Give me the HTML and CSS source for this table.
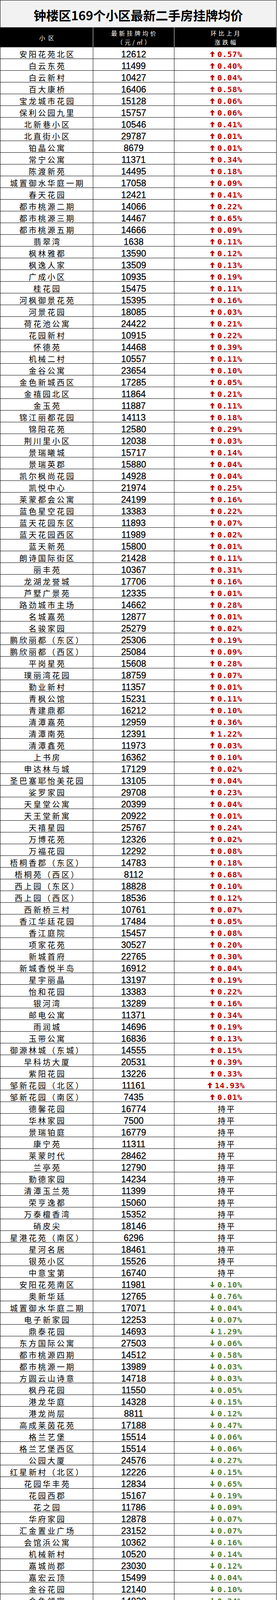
FILE: index.html
```
<!DOCTYPE html>
<html lang="zh-CN">
<head>
<meta charset="utf-8">
<title>钟楼区169个小区最新二手房挂牌均价</title>
<link rel="stylesheet" href="styles.css">
</head>
<body>
<div class="sheet">
  <div class="title">钟楼区169个小区最新二手房挂牌均价</div>
  <div class="head">
    <div class="wide">小区</div>
    <div><span>最新挂牌均价</span><span>（元/㎡）</span></div>
    <div><span>环比上月</span><span>涨跌幅</span></div>
  </div>
  <div class="row"><span class="n">安阳花苑北区</span><span class="p">12612</span><span class="c u">0.57%</span></div>
  <div class="row"><span class="n">白云东苑</span><span class="p">11499</span><span class="c u">0.40%</span></div>
  <div class="row"><span class="n">白云新村</span><span class="p">10427</span><span class="c u">0.04%</span></div>
  <div class="row"><span class="n">百大康桥</span><span class="p">16406</span><span class="c u">0.58%</span></div>
  <div class="row"><span class="n">宝龙城市花园</span><span class="p">15128</span><span class="c u">0.06%</span></div>
  <div class="row"><span class="n">保利公园九里</span><span class="p">15757</span><span class="c u">0.06%</span></div>
  <div class="row"><span class="n">北新巷小区</span><span class="p">10546</span><span class="c u">0.41%</span></div>
  <div class="row"><span class="n">北直街小区</span><span class="p">29787</span><span class="c u">0.01%</span></div>
  <div class="row"><span class="n">铂晶公寓</span><span class="p">8679</span><span class="c u">0.01%</span></div>
  <div class="row"><span class="n">常宁公寓</span><span class="p">11371</span><span class="c u">0.34%</span></div>
  <div class="row"><span class="n">陈渡新苑</span><span class="p">14495</span><span class="c u">0.18%</span></div>
  <div class="row"><span class="n">城置御水华庭一期</span><span class="p">17058</span><span class="c u">0.09%</span></div>
  <div class="row"><span class="n">春天花园</span><span class="p">12421</span><span class="c u">0.41%</span></div>
  <div class="row"><span class="n">都市桃源二期</span><span class="p">14066</span><span class="c u">0.22%</span></div>
  <div class="row"><span class="n">都市桃源三期</span><span class="p">14467</span><span class="c u">0.65%</span></div>
  <div class="row"><span class="n">都市桃源五期</span><span class="p">14666</span><span class="c u">0.09%</span></div>
  <div class="row"><span class="n">翡翠湾</span><span class="p">1638</span><span class="c u">0.11%</span></div>
  <div class="row"><span class="n">枫林雅都</span><span class="p">13590</span><span class="c u">0.12%</span></div>
  <div class="row"><span class="n">枫逸人家</span><span class="p">13509</span><span class="c u">0.13%</span></div>
  <div class="row"><span class="n">广成小区</span><span class="p">10935</span><span class="c u">0.19%</span></div>
  <div class="row"><span class="n">桂花园</span><span class="p">15475</span><span class="c u">0.11%</span></div>
  <div class="row"><span class="n">河枫御景花苑</span><span class="p">15395</span><span class="c u">0.16%</span></div>
  <div class="row"><span class="n">河景花园</span><span class="p">18085</span><span class="c u">0.03%</span></div>
  <div class="row"><span class="n">荷花池公寓</span><span class="p">24422</span><span class="c u">0.21%</span></div>
  <div class="row"><span class="n">花园新村</span><span class="p">10915</span><span class="c u">0.22%</span></div>
  <div class="row"><span class="n">怀德苑</span><span class="p">14468</span><span class="c u">0.39%</span></div>
  <div class="row"><span class="n">机械二村</span><span class="p">10557</span><span class="c u">0.11%</span></div>
  <div class="row"><span class="n">金谷公寓</span><span class="p">23654</span><span class="c u">0.10%</span></div>
  <div class="row"><span class="n">金色新城西区</span><span class="p">17285</span><span class="c u">0.05%</span></div>
  <div class="row"><span class="n">金禧园北区</span><span class="p">11864</span><span class="c u">0.21%</span></div>
  <div class="row"><span class="n">金玉苑</span><span class="p">11887</span><span class="c u">0.11%</span></div>
  <div class="row"><span class="n">锦江丽都花园</span><span class="p">14113</span><span class="c u">0.18%</span></div>
  <div class="row"><span class="n">锦阳花苑</span><span class="p">12580</span><span class="c u">0.29%</span></div>
  <div class="row"><span class="n">荆川里小区</span><span class="p">12038</span><span class="c u">0.03%</span></div>
  <div class="row"><span class="n">景瑞曦城</span><span class="p">15717</span><span class="c u">0.14%</span></div>
  <div class="row"><span class="n">景瑞英郡</span><span class="p">15880</span><span class="c u">0.04%</span></div>
  <div class="row"><span class="n">凯尔枫尚花园</span><span class="p">14928</span><span class="c u">0.04%</span></div>
  <div class="row"><span class="n">凯悦中心</span><span class="p">21974</span><span class="c u">0.25%</span></div>
  <div class="row"><span class="n">莱蒙都会公寓</span><span class="p">24199</span><span class="c u">0.16%</span></div>
  <div class="row"><span class="n">蓝色星空花园</span><span class="p">13383</span><span class="c u">0.22%</span></div>
  <div class="row"><span class="n">蓝天花园东区</span><span class="p">11893</span><span class="c u">0.07%</span></div>
  <div class="row"><span class="n">蓝天花园西区</span><span class="p">11989</span><span class="c u">0.02%</span></div>
  <div class="row"><span class="n">蓝天新苑</span><span class="p">15800</span><span class="c u">0.01%</span></div>
  <div class="row"><span class="n">朗诗国际街区</span><span class="p">21428</span><span class="c u">0.11%</span></div>
  <div class="row"><span class="n">丽丰苑</span><span class="p">10367</span><span class="c u">0.31%</span></div>
  <div class="row"><span class="n">龙湖龙誉城</span><span class="p">17706</span><span class="c u">0.16%</span></div>
  <div class="row"><span class="n">芦墅广景苑</span><span class="p">12335</span><span class="c u">0.01%</span></div>
  <div class="row"><span class="n">路劲城市主场</span><span class="p">14662</span><span class="c u">0.28%</span></div>
  <div class="row"><span class="n">名城嘉苑</span><span class="p">12877</span><span class="c u">0.01%</span></div>
  <div class="row"><span class="n">名骏家园</span><span class="p">25279</span><span class="c u">0.02%</span></div>
  <div class="row"><span class="n">鹏欣丽都（东区）</span><span class="p">25306</span><span class="c u">0.19%</span></div>
  <div class="row"><span class="n">鹏欣丽都（西区）</span><span class="p">25084</span><span class="c u">0.09%</span></div>
  <div class="row"><span class="n">平岗星苑</span><span class="p">15608</span><span class="c u">0.28%</span></div>
  <div class="row"><span class="n">璞丽湾花园</span><span class="p">18759</span><span class="c u">0.07%</span></div>
  <div class="row"><span class="n">勤业新村</span><span class="p">11357</span><span class="c u">0.01%</span></div>
  <div class="row"><span class="n">青枫公馆</span><span class="p">15231</span><span class="c u">0.11%</span></div>
  <div class="row"><span class="n">青建鼎都</span><span class="p">16212</span><span class="c u">0.10%</span></div>
  <div class="row"><span class="n">清潭嘉苑</span><span class="p">12959</span><span class="c u">0.36%</span></div>
  <div class="row"><span class="n">清潭南苑</span><span class="p">12391</span><span class="c u">1.22%</span></div>
  <div class="row"><span class="n">清潭鑫苑</span><span class="p">11973</span><span class="c u">0.03%</span></div>
  <div class="row"><span class="n">上书房</span><span class="p">16362</span><span class="c u">0.10%</span></div>
  <div class="row"><span class="n">申达林与城</span><span class="p">17129</span><span class="c u">0.02%</span></div>
  <div class="row"><span class="n">圣巴塞耶怡美花园</span><span class="p">13105</span><span class="c u">0.04%</span></div>
  <div class="row"><span class="n">娑罗家园</span><span class="p">29708</span><span class="c u">0.23%</span></div>
  <div class="row"><span class="n">天皇堂公寓</span><span class="p">20399</span><span class="c u">0.04%</span></div>
  <div class="row"><span class="n">天王堂新寓</span><span class="p">20922</span><span class="c u">0.01%</span></div>
  <div class="row"><span class="n">天禧星园</span><span class="p">25767</span><span class="c u">0.24%</span></div>
  <div class="row"><span class="n">万博花苑</span><span class="p">12326</span><span class="c u">0.02%</span></div>
  <div class="row"><span class="n">万福花园</span><span class="p">12292</span><span class="c u">0.08%</span></div>
  <div class="row"><span class="n">梧桐香郡（东区）</span><span class="p">14783</span><span class="c u">0.18%</span></div>
  <div class="row"><span class="n">梧桐苑（西区）</span><span class="p">8112</span><span class="c u">0.68%</span></div>
  <div class="row"><span class="n">西上园（东区）</span><span class="p">18828</span><span class="c u">0.10%</span></div>
  <div class="row"><span class="n">西上园（西区）</span><span class="p">18536</span><span class="c u">0.12%</span></div>
  <div class="row"><span class="n">西新桥三村</span><span class="p">10761</span><span class="c u">0.07%</span></div>
  <div class="row"><span class="n">香江华廷花园</span><span class="p">17484</span><span class="c u">0.05%</span></div>
  <div class="row"><span class="n">香江庭院</span><span class="p">15457</span><span class="c u">0.08%</span></div>
  <div class="row"><span class="n">项家花苑</span><span class="p">30527</span><span class="c u">0.20%</span></div>
  <div class="row"><span class="n">新城首府</span><span class="p">22765</span><span class="c u">0.30%</span></div>
  <div class="row"><span class="n">新城香悦半岛</span><span class="p">16912</span><span class="c u">0.04%</span></div>
  <div class="row"><span class="n">星宇丽晶</span><span class="p">13197</span><span class="c u">0.19%</span></div>
  <div class="row"><span class="n">怡和花园</span><span class="p">13383</span><span class="c u">0.22%</span></div>
  <div class="row"><span class="n">银河湾</span><span class="p">13289</span><span class="c u">0.16%</span></div>
  <div class="row"><span class="n">邮电公寓</span><span class="p">11371</span><span class="c u">0.34%</span></div>
  <div class="row"><span class="n">雨润城</span><span class="p">14696</span><span class="c u">0.19%</span></div>
  <div class="row"><span class="n">玉带公寓</span><span class="p">16836</span><span class="c u">0.13%</span></div>
  <div class="row"><span class="n">御源林城（东城）</span><span class="p">14555</span><span class="c u">0.15%</span></div>
  <div class="row"><span class="n">早科坊大厦</span><span class="p">20531</span><span class="c u">0.39%</span></div>
  <div class="row"><span class="n">紫阳花园</span><span class="p">13226</span><span class="c u">0.33%</span></div>
  <div class="row"><span class="n">邹新花园（北区）</span><span class="p">11161</span><span class="c u">14.93%</span></div>
  <div class="row"><span class="n">邹新花园（南区）</span><span class="p">7435</span><span class="c u">0.01%</span></div>
  <div class="row"><span class="n">德馨花园</span><span class="p">16774</span><span class="f">持平</span></div>
  <div class="row"><span class="n">华林家园</span><span class="p">7500</span><span class="f">持平</span></div>
  <div class="row"><span class="n">景瑞铂庭</span><span class="p">16779</span><span class="f">持平</span></div>
  <div class="row"><span class="n">康宁苑</span><span class="p">11311</span><span class="f">持平</span></div>
  <div class="row"><span class="n">莱蒙时代</span><span class="p">28462</span><span class="f">持平</span></div>
  <div class="row"><span class="n">兰亭苑</span><span class="p">12790</span><span class="f">持平</span></div>
  <div class="row"><span class="n">勤德家园</span><span class="p">14234</span><span class="f">持平</span></div>
  <div class="row"><span class="n">清潭玉兰苑</span><span class="p">11399</span><span class="f">持平</span></div>
  <div class="row"><span class="n">荣亨逸都</span><span class="p">15060</span><span class="f">持平</span></div>
  <div class="row"><span class="n">万泰檀香湾</span><span class="p">15352</span><span class="f">持平</span></div>
  <div class="row"><span class="n">硝皮尖</span><span class="p">18146</span><span class="f">持平</span></div>
  <div class="row"><span class="n">星港花苑（南区）</span><span class="p">6296</span><span class="f">持平</span></div>
  <div class="row"><span class="n">星河名居</span><span class="p">18461</span><span class="f">持平</span></div>
  <div class="row"><span class="n">银苑小区</span><span class="p">15526</span><span class="f">持平</span></div>
  <div class="row"><span class="n">中意宝第</span><span class="p">16740</span><span class="f">持平</span></div>
  <div class="row"><span class="n">安阳花苑南区</span><span class="p">11981</span><span class="c d">0.10%</span></div>
  <div class="row"><span class="n">奥新华廷</span><span class="p">12765</span><span class="c d">0.76%</span></div>
  <div class="row"><span class="n">城置御水华庭二期</span><span class="p">17071</span><span class="c d">0.04%</span></div>
  <div class="row"><span class="n">电子新家园</span><span class="p">12253</span><span class="c d">0.07%</span></div>
  <div class="row"><span class="n">鼎泰花园</span><span class="p">14693</span><span class="c d">1.29%</span></div>
  <div class="row"><span class="n">东方国际公寓</span><span class="p">27503</span><span class="c d">0.06%</span></div>
  <div class="row"><span class="n">都市桃源四期</span><span class="p">14512</span><span class="c d">0.58%</span></div>
  <div class="row"><span class="n">都市桃源一期</span><span class="p">13989</span><span class="c d">0.03%</span></div>
  <div class="row"><span class="n">方圆云山诗意</span><span class="p">14718</span><span class="c d">0.03%</span></div>
  <div class="row"><span class="n">枫丹花园</span><span class="p">11550</span><span class="c d">0.05%</span></div>
  <div class="row"><span class="n">港龙华庭</span><span class="p">14328</span><span class="c d">0.15%</span></div>
  <div class="row"><span class="n">港龙尚层</span><span class="p">8811</span><span class="c d">0.12%</span></div>
  <div class="row"><span class="n">高成莱茵花苑</span><span class="p">17188</span><span class="c d">0.47%</span></div>
  <div class="row"><span class="n">格兰艺堡</span><span class="p">15514</span><span class="c d">0.06%</span></div>
  <div class="row"><span class="n">格兰艺堡西区</span><span class="p">15514</span><span class="c d">0.06%</span></div>
  <div class="row"><span class="n">公园大厦</span><span class="p">24576</span><span class="c d">0.27%</span></div>
  <div class="row"><span class="n">红星新村（北区）</span><span class="p">12226</span><span class="c d">0.15%</span></div>
  <div class="row"><span class="n">花园华丰苑</span><span class="p">12834</span><span class="c d">0.65%</span></div>
  <div class="row"><span class="n">花园西郡</span><span class="p">15167</span><span class="c d">0.19%</span></div>
  <div class="row"><span class="n">花之园</span><span class="p">11786</span><span class="c d">0.09%</span></div>
  <div class="row"><span class="n">华府家园</span><span class="p">12878</span><span class="c d">0.07%</span></div>
  <div class="row"><span class="n">汇金置业广场</span><span class="p">23152</span><span class="c d">0.07%</span></div>
  <div class="row"><span class="n">会馆浜公寓</span><span class="p">10362</span><span class="c d">0.16%</span></div>
  <div class="row"><span class="n">机械新村</span><span class="p">10520</span><span class="c d">0.14%</span></div>
  <div class="row"><span class="n">嘉城尚郡</span><span class="p">23030</span><span class="c d">0.12%</span></div>
  <div class="row"><span class="n">嘉宏云顶</span><span class="p">15499</span><span class="c d">0.04%</span></div>
  <div class="row"><span class="n">金谷花园</span><span class="p">12140</span><span class="c d">0.10%</span></div>
  <div class="row"><span class="n">金色领寓</span><span class="p">14830</span><span class="c d">0.24%</span></div>
  <div class="row"><span class="n">金色新城东区</span><span class="p">16903</span><span class="c d">0.14%</span></div>
  <div class="row"><span class="n">金禧园南区</span><span class="p">11703</span><span class="c d">0.01%</span></div>
  <div class="row"><span class="n">金洲花城</span><span class="p">13536</span><span class="c d">0.05%</span></div>
  <div class="row"><span class="n">京城豪苑</span><span class="p">38757</span><span class="c d">0.07%</span></div>
  <div class="row"><span class="n">凯纳华侨城二期</span><span class="p">23720</span><span class="c d">0.03%</span></div>
  <div class="row"><span class="n">凯纳华侨城一期</span><span class="p">24184</span><span class="c d">0.38%</span></div>
  <div class="row"><span class="n">凯纳商务广场</span><span class="p">1108</span><span class="c d">0.02%</span></div>
  <div class="row"><span class="n">乐颐大厦</span><span class="p">11953</span><span class="c d">0.45%</span></div>
  <div class="row"><span class="n">芦墅星苑</span><span class="p">16082</span><span class="c d">0.90%</span></div>
  <div class="row"><span class="n">觅渡雅居</span><span class="p">34667</span><span class="c d">0.72%</span></div>
  <div class="row"><span class="n">勤业四村</span><span class="p">11449</span><span class="c d">0.34%</span></div>
  <div class="row"><span class="n">青枫壹号</span><span class="p">17812</span><span class="c d">0.13%</span></div>
  <div class="row"><span class="n">青枫颐景花园</span><span class="p">13420</span><span class="c d">0.05%</span></div>
  <div class="row"><span class="n">清潭花苑</span><span class="p">12624</span><span class="c d">0.01%</span></div>
  <div class="row"><span class="n">清潭六村</span><span class="p">11065</span><span class="c d">0.06%</span></div>
  <div class="row"><span class="n">三堡街南楼</span><span class="p">10945</span><span class="c d">0.06%</span></div>
  <div class="row"><span class="n">深业华府</span><span class="p">16592</span><span class="c d">0.07%</span></div>
  <div class="row"><span class="n">泰富时代广场</span><span class="p">9157</span><span class="c d">1.45%</span></div>
  <div class="row"><span class="n">泰盈八千里</span><span class="p">13613</span><span class="c d">0.10%</span></div>
  <div class="row"><span class="n">万水美兰城</span><span class="p">14962</span><span class="c d">0.03%</span></div>
  <div class="row"><span class="n">文亨花园</span><span class="p">14171</span><span class="c d">0.56%</span></div>
  <div class="row"><span class="n">吴家场公寓</span><span class="p">22478</span><span class="c d">0.76%</span></div>
  <div class="row"><span class="n">梧桐香郡（西区）</span><span class="p">14813</span><span class="c d">0.02%</span></div>
  <div class="row"><span class="n">梧桐苑（东区）</span><span class="p">7413</span><span class="c d">0.69%</span></div>
  <div class="row"><span class="n">西横街北弄小区</span><span class="p">18091</span><span class="c d">0.12%</span></div>
  <div class="row"><span class="n">西新桥二村</span><span class="p">10697</span><span class="c d">0.06%</span></div>
  <div class="row"><span class="n">西新桥公寓</span><span class="p">16681</span><span class="c d">0.04%</span></div>
  <div class="row"><span class="n">新奥佳园</span><span class="p">13765</span><span class="c d">0.89%</span></div>
  <div class="row"><span class="n">星港花苑（北区）</span><span class="p">6031</span><span class="c d">0.05%</span></div>
  <div class="row"><span class="n">星盛家园</span><span class="p">12495</span><span class="c d">0.06%</span></div>
  <div class="row"><span class="n">星鑫家园二期</span><span class="p">11844</span><span class="c d">0.08%</span></div>
  <div class="row"><span class="n">玉隆花园（北区）</span><span class="p">30118</span><span class="c d">0.08%</span></div>
  <div class="row"><span class="n">玉隆花园（南区）</span><span class="p">30299</span><span class="c d">0.04%</span></div>
  <div class="row"><span class="n">御源林城（西区）</span><span class="p">13858</span><span class="c d">0.12%</span></div>
  <div class="row"><span class="n">云庭公寓</span><span class="p">26628</span><span class="c d">0.14%</span></div>
  <div class="row"><span class="n">运河花园</span><span class="p">6713</span><span class="c d">0.35%</span></div>
</div>
</body>
</html>
```
FILE: styles.css
```
* {
  box-sizing: border-box;
}

html,
body {
  margin: 0;
  padding: 0;
  background: #fff;
}

.sheet {
  width: 709px;
  border: 1px solid #000;
  border-bottom: 0;
  font-family: "Noto Sans CJK SC", "Noto Sans", sans-serif;
  color: #000;
}

.title {
  height: 69px;
  background: #f2f2f2;
  display: flex;
  align-items: center;
  justify-content: center;
  padding-top: 4px;
  font-size: 32px;
  line-height: 40px;
  font-weight: 700;
  letter-spacing: 0;
  white-space: nowrap;
  overflow: hidden;
}

.head {
  display: grid;
  grid-template-columns: 238px 208px 1fr;
  grid-template-rows: 51px;
  height: 51px;
  background: #000;
  color: #fff;
  font-size: 15px;
  overflow: hidden;
}

.head > div {
  display: flex;
  flex-direction: column;
  align-items: center;
  justify-content: center;
  line-height: 23px;
  letter-spacing: 5px;
  padding-left: 5px;
  border-right: 1px solid #fff;
  white-space: nowrap;
}

.head > div:last-child {
  border-right: 0;
}

.head > .wide {
  letter-spacing: 8px;
  padding-left: 8px;
  padding-top: 2px;
}

.row {
  display: grid;
  grid-template-columns: 238px 208px 1fr;
  grid-template-rows: 29px;
  height: 30px;
  border-bottom: 1px solid #000;
  overflow: hidden;
}

.row > span {
  display: flex;
  align-items: center;
  justify-content: center;
  height: 29px;
  padding-top: 6px;
  border-right: 1px solid #000;
  white-space: nowrap;
}

.row > span:last-child {
  border-right: 0;
}

.n {
  font-size: 20px;
  line-height: 20px;
  letter-spacing: 4px;
  padding-left: 4px;
}

.p {
  font-family: "Liberation Sans", Arial, sans-serif;
  font-size: 23px;
  line-height: 20px;
  -webkit-text-stroke: 0.3px #000;
}

.c {
  font-family: "DejaVu Sans Mono", "Liberation Mono", monospace;
  font-weight: 700;
  font-size: 20px;
  line-height: 20px;
  letter-spacing: 0.8px;
  padding-left: 4px;
}

.c::before {
  content: "";
  width: 13px;
  height: 15px;
  margin-right: 6px;
  background: currentColor;
  flex: none;
}

.u {
  color: #c00000;
}

.u::before {
  clip-path: polygon(50% 0, 100% 45%, 66% 45%, 66% 100%, 34% 100%, 34% 45%, 0 45%);
}

.d {
  color: #548235;
}

.d::before {
  clip-path: polygon(36% 0, 64% 0, 64% 58%, 100% 58%, 50% 100%, 0 58%, 36% 58%);
}

.f {
  font-size: 20px;
  line-height: 20px;
  letter-spacing: 3px;
  padding-left: 7px;
}
```
